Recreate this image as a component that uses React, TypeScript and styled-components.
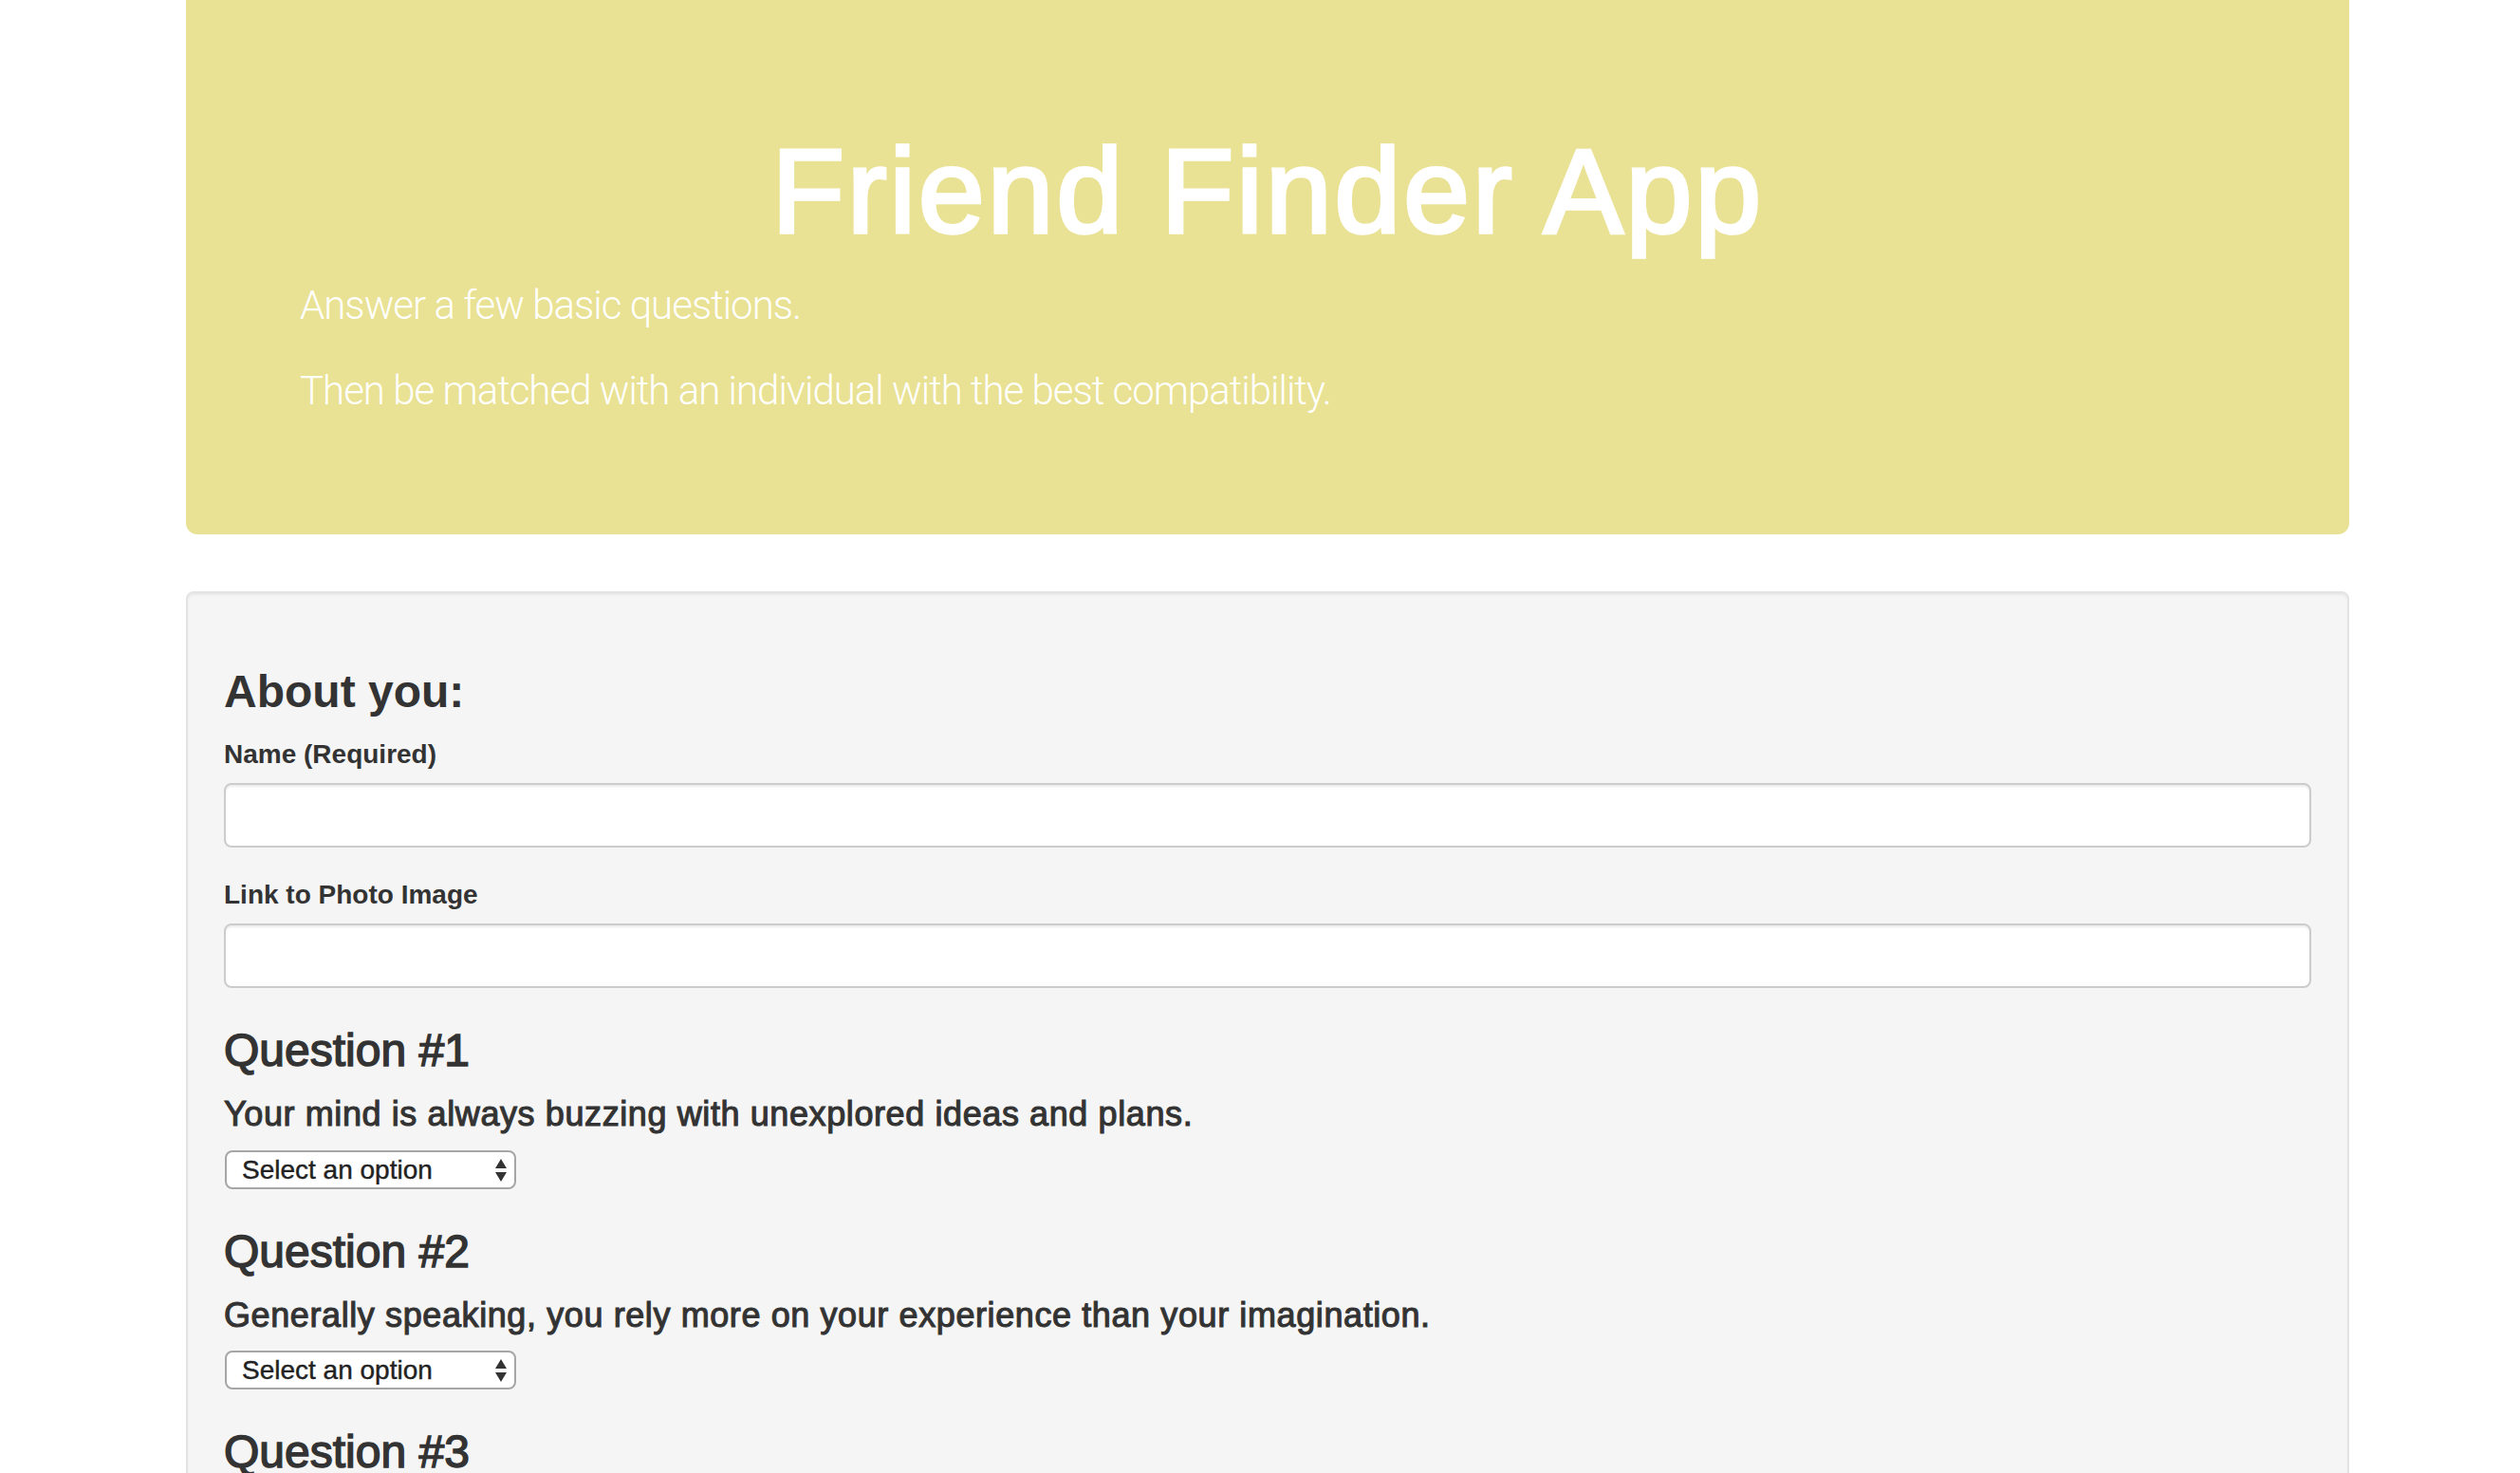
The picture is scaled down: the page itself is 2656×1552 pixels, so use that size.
import styled, { createGlobalStyle } from "styled-components"

const questions = [
  "Your mind is always buzzing with unexplored ideas and plans.",
  "Generally speaking, you rely more on your experience than your imagination.",
  "You find it easy to stay relaxed and focused even when there is some pressure.",
  "You rarely do something just out of sheer curiosity.",
  "People can rarely upset you.",
  "It is often difficult for you to relate to other people’s feelings.",
  "In a discussion, truth should be more important than people’s sensitivities.",
  "You rarely get carried away by fantasies and ideas.",
  "You think that everyone’s views should be respected regardless of whether they are supported by facts or not.",
  "You feel more energetic after spending time with a group of people.",
]

const options = [
  "1 (Strongly Disagree)",
  "2",
  "3",
  "4",
  "5 (Strongly Agree)",
]

export default function App() {
  return (
    <>
      <GlobalStyle />
      <Page>
        <Jumbotron>
          <Title>Friend Finder App</Title>
          <Lead>Answer a few basic questions.</Lead>
          <Lead>Then be matched with an individual with the best compatibility.</Lead>
        </Jumbotron>

        <Well>
          <SectionTitle>About you:</SectionTitle>
          <FormGroup>
            <Label htmlFor="name">Name (Required)</Label>
            <Input id="name" type="text" />
          </FormGroup>
          <FormGroup>
            <Label htmlFor="photo">Link to Photo Image</Label>
            <Input id="photo" type="text" />
          </FormGroup>

          {questions.map((q, i) => (
            <Question key={i}>
              <QuestionTitle>Question #{i + 1}</QuestionTitle>
              <QuestionText>{q}</QuestionText>
              <SelectWrap>
                <Select defaultValue="">
                  <option value="" disabled>
                    Select an option
                  </option>
                  {options.map((o, j) => (
                    <option key={j} value={j + 1}>
                      {o}
                    </option>
                  ))}
                </Select>
                <Arrows viewBox="0 0 12 24" width="12" height="24">
                  <polygon points="6,0 12,10 0,10" />
                  <polygon points="0,14 12,14 6,24" />
                </Arrows>
              </SelectWrap>
            </Question>
          ))}

          <SubmitButton type="button">Submit</SubmitButton>
        </Well>
      </Page>
    </>
  )
}

const GlobalStyle = createGlobalStyle`
  * {
    box-sizing: border-box;
  }
  body {
    margin: 0;
    background: #ffffff;
    color: #333333;
    font-family: "Liberation Sans", Arial, sans-serif;
    font-size: 28px;
    line-height: 1.42857;
  }
`

const Page = styled.div`
  width: 2280px;
  margin-left: 196px;
  padding-bottom: 60px;
`

const Jumbotron = styled.div`
  background-color: #e9e193;
  color: #ffffff;
  border-radius: 0 0 12px 12px;
  padding: 93px 120px 91px;
  margin-bottom: 60px;
`

const Title = styled.h1`
  margin: 40px 0 20px;
  font-size: 126px;
  line-height: 1.1;
  font-weight: 400;
  letter-spacing: 2.6px;
  -webkit-text-stroke: 3.5px #ffffff;
  text-align: center;
`

const Lead = styled.p`
  margin: 0 0 30px;
  font-family: Roboto, "Liberation Sans", sans-serif;
  font-size: 42px;
  line-height: 60px;
  font-weight: 300;
  letter-spacing: -1px;
`

const Well = styled.div`
  background-color: #f5f5f5;
  border: 2px solid #e3e3e3;
  border-radius: 8px;
  padding: 38px;
  box-shadow: inset 0 2px 2px rgba(0, 0, 0, 0.05);
`

const SectionTitle = styled.h3`
  margin: 40px 0 20px;
  font-size: 48px;
  line-height: 1.1;
  font-weight: 700;
`

const FormGroup = styled.div`
  margin-bottom: 30px;
`

const Label = styled.label`
  display: inline-block;
  margin-bottom: 10px;
  font-weight: 700;
`

const Input = styled.input`
  display: block;
  width: 100%;
  height: 68px;
  padding: 12px 24px;
  font-size: 28px;
  font-family: inherit;
  color: #555555;
  background-color: #ffffff;
  border: 2px solid #cccccc;
  border-radius: 8px;
  box-shadow: inset 0 2px 2px rgba(0, 0, 0, 0.075);
  outline: none;
`

const Question = styled.div`
  margin-bottom: 0;
`

const QuestionTitle = styled.h3`
  margin: 40px 0 20px;
  font-size: 48px;
  line-height: 1.1;
  font-weight: 400;
  -webkit-text-stroke: 1.5px #333333;
`

const QuestionText = styled.h4`
  margin: 0 0 18px;
  font-size: 36px;
  line-height: 1.1;
  font-weight: 400;
  letter-spacing: 0.6px;
  -webkit-text-stroke: 1.1px #333333;
`

const SelectWrap = styled.div`
  position: relative;
  width: 307px;
  height: 41px;
  margin-left: 1px;
`

const Select = styled.select`
  appearance: none;
  display: block;
  width: 307px;
  height: 41px;
  padding: 0 40px 0 16px;
  font-family: "Liberation Sans", Arial, sans-serif;
  font-size: 28px;
  color: #222222;
  background-color: #ffffff;
  border: 2px solid #a6a6a6;
  border-radius: 8px;
  outline: none;
  -webkit-text-stroke: 0.4px #222222;
`

const Arrows = styled.svg`
  position: absolute;
  right: 10px;
  top: 9px;
  fill: #333333;
  pointer-events: none;
`

const SubmitButton = styled.button`
  margin-top: 60px;
  padding: 12px 24px;
  font-family: inherit;
  font-size: 28px;
  color: #ffffff;
  background-color: #337ab7;
  border: 2px solid #2e6da4;
  border-radius: 8px;
`
